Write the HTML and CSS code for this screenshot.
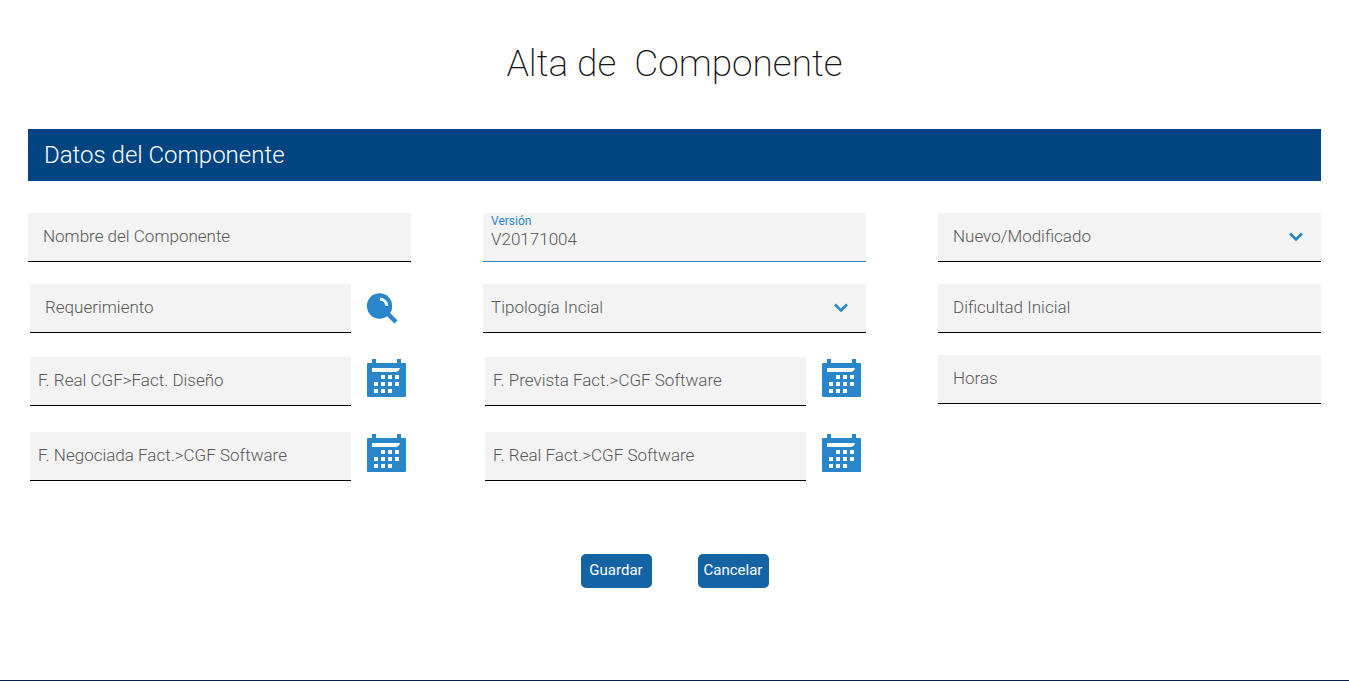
FILE: index.html
```html
<!DOCTYPE html>
<html lang="es">
<head>
<meta charset="utf-8">
<meta name="viewport" content="width=device-width, initial-scale=1">
<title>Alta de Componente</title>
<link rel="stylesheet" href="styles.css">
</head>
<body>
<svg class="sprite" aria-hidden="true">
  <symbol id="calendar" viewBox="0 0 39 38">
    <path fill="currentColor" d="M0 5Q0 4 1 4H5V0H9V4H30V0H34V4H38Q39 4 39 5V37Q39 38 38 38H1Q0 38 0 37Z"/>
    <path fill="#fff" d="M5 9H33Q32 13 28 13H5ZM14 16h4v4h-4zM21 16h4v4h-4zM28 16h4v4h-4zM7 23h4v4h-4zM14 23h4v4h-4zM21 23h4v4h-4zM28 23h4v4h-4zM7 30h4v4h-4zM14 30h4v4h-4zM21 30h4v4h-4z"/>
  </symbol>
  <symbol id="search" viewBox="0 0 39 38">
    <circle cx="12.500" cy="20" r="12.700" fill="currentColor"/>
    <path d="M20 27L29 36" fill="none" stroke="currentColor" stroke-width="4.500"/>
    <path d="M13 13A7.500 7.500 0 0 1 20 20" fill="none" stroke="#fff" stroke-width="2.800"/>
  </symbol>
  <symbol id="chevron" viewBox="0 0 14 10">
    <path d="M1 1.500L7 7.500L13 1.500" fill="none" stroke="currentColor" stroke-width="2.600"/>
  </symbol>
</svg>
<main class="page">
  <h1 class="title">Alta de&nbsp; Componente</h1>
  <form class="form">
    <h2 class="section-title">Datos del Componente</h2>
    <div class="grid">
      <div class="field"><input class="control control--wide" type="text" placeholder="Nombre del Componente" aria-label="Nombre del Componente"></div>
      <div class="field">
        <label class="float-label" for="version">Versión</label>
        <input class="control control--active" id="version" type="text" value="V20171004">
      </div>
      <div class="field">
        <select class="control control--wide" aria-label="Nuevo/Modificado"><option>Nuevo/Modificado</option></select>
        <svg class="chevron" aria-hidden="true"><use href="#chevron"/></svg>
      </div>

      <div class="lookup">
        <input class="control control--wide" type="text" placeholder="Requerimiento" aria-label="Requerimiento">
        <button class="icon-button" type="button" aria-label="Buscar requerimiento"><svg class="icon"><use href="#search"/></svg></button>
      </div>
      <div class="field">
        <select class="control" aria-label="Tipología Incial"><option>Tipología Incial</option></select>
        <svg class="chevron" aria-hidden="true"><use href="#chevron"/></svg>
      </div>
      <div class="field"><input class="control control--wide" type="text" placeholder="Dificultad Inicial" aria-label="Dificultad Inicial"></div>

      <div class="lookup lookup--date">
        <input class="control" type="text" placeholder="F. Real CGF&gt;Fact. Diseño" aria-label="F. Real CGF&gt;Fact. Diseño">
        <button class="icon-button" type="button" aria-label="Elegir fecha"><svg class="icon"><use href="#calendar"/></svg></button>
      </div>
      <div class="lookup lookup--date">
        <input class="control" type="text" placeholder="F. Prevista Fact.&gt;CGF Software" aria-label="F. Prevista Fact.&gt;CGF Software">
        <button class="icon-button" type="button" aria-label="Elegir fecha"><svg class="icon"><use href="#calendar"/></svg></button>
      </div>
      <div class="field"><input class="control control--wide" type="text" placeholder="Horas" aria-label="Horas"></div>

      <div class="lookup lookup--date">
        <input class="control" type="text" placeholder="F. Negociada Fact.&gt;CGF Software" aria-label="F. Negociada Fact.&gt;CGF Software">
        <button class="icon-button" type="button" aria-label="Elegir fecha"><svg class="icon"><use href="#calendar"/></svg></button>
      </div>
      <div class="lookup lookup--date">
        <input class="control" type="text" placeholder="F. Real Fact.&gt;CGF Software" aria-label="F. Real Fact.&gt;CGF Software">
        <button class="icon-button" type="button" aria-label="Elegir fecha"><svg class="icon"><use href="#calendar"/></svg></button>
      </div>
    </div>
    <div class="actions">
      <button class="button" type="submit">Guardar</button>
      <button class="button" type="button">Cancelar</button>
    </div>
  </form>
</main>
</body>
</html>
```
FILE: styles.css
```css
* { box-sizing: border-box; }

body {
  margin: 0;
  background: #fff;
  color: #121212;
  font-family: Roboto, "Liberation Sans", sans-serif;
  font-weight: 300;
}

.sprite { display: none; }

.page {
  min-height: 100vh;
  padding: 40px 28px;
  border-bottom: 1px solid #072146;
}

.title {
  margin: 0 0 41px;
  font-size: 37px;
  font-weight: 200;
  line-height: 48px;
  text-align: center;
}

.section-title {
  margin: 0 0 32px;
  padding: 1px 16px 0;
  background: #004481;
  color: #fff;
  font-size: 24px;
  font-weight: 300;
  line-height: 51px;
}

.grid {
  display: grid;
  grid-template-columns: repeat(3, minmax(0, 1fr));
  gap: 22px 72px;
  align-items: start;
}

.field { position: relative; }

.lookup {
  display: flex;
  gap: 16px;
  padding: 0 5px 0 2px;
}

.lookup--date {
  padding-top: 2px;
  padding-bottom: 2px;
}

.control {
  appearance: none;
  display: block;
  flex: 1;
  width: 100%;
  min-width: 0;
  height: 49px;
  margin: 0;
  padding: 0 8px 2px;
  border: 0;
  border-bottom: 1px solid #000;
  border-radius: 0;
  background: #f3f3f3;
  color: #585858;
  font: inherit;
  font-size: 17px;
}

.control--wide {
  padding-left: 15px;
  padding-right: 15px;
}

.control--active {
  padding-top: 6px;
  border-bottom-color: #2a86ca;
}

.control::placeholder {
  color: #585858;
  opacity: 1;
}

.float-label {
  position: absolute;
  top: 0;
  left: 8px;
  color: #2a86ca;
  font-size: 12px;
  font-weight: 400;
  line-height: 16px;
}

.chevron {
  position: absolute;
  top: 19px;
  right: 18px;
  width: 14px;
  height: 10px;
  color: #2a86ca;
  pointer-events: none;
}

.icon-button {
  width: 39px;
  height: 38px;
  margin: 2px 0;
  padding: 0;
  border: 0;
  background: none;
  color: #2a86ca;
}

.icon {
  display: block;
  width: 39px;
  height: 38px;
  overflow: visible;
}

.actions {
  display: flex;
  justify-content: center;
  gap: 46px;
  margin-top: 71px;
}

.button {
  width: 71px;
  height: 34px;
  padding: 0 0 2px;
  border: 0;
  border-radius: 5px;
  background: #1464a5;
  color: #fff;
  font: inherit;
  font-size: 15px;
  font-weight: 400;
}
```
